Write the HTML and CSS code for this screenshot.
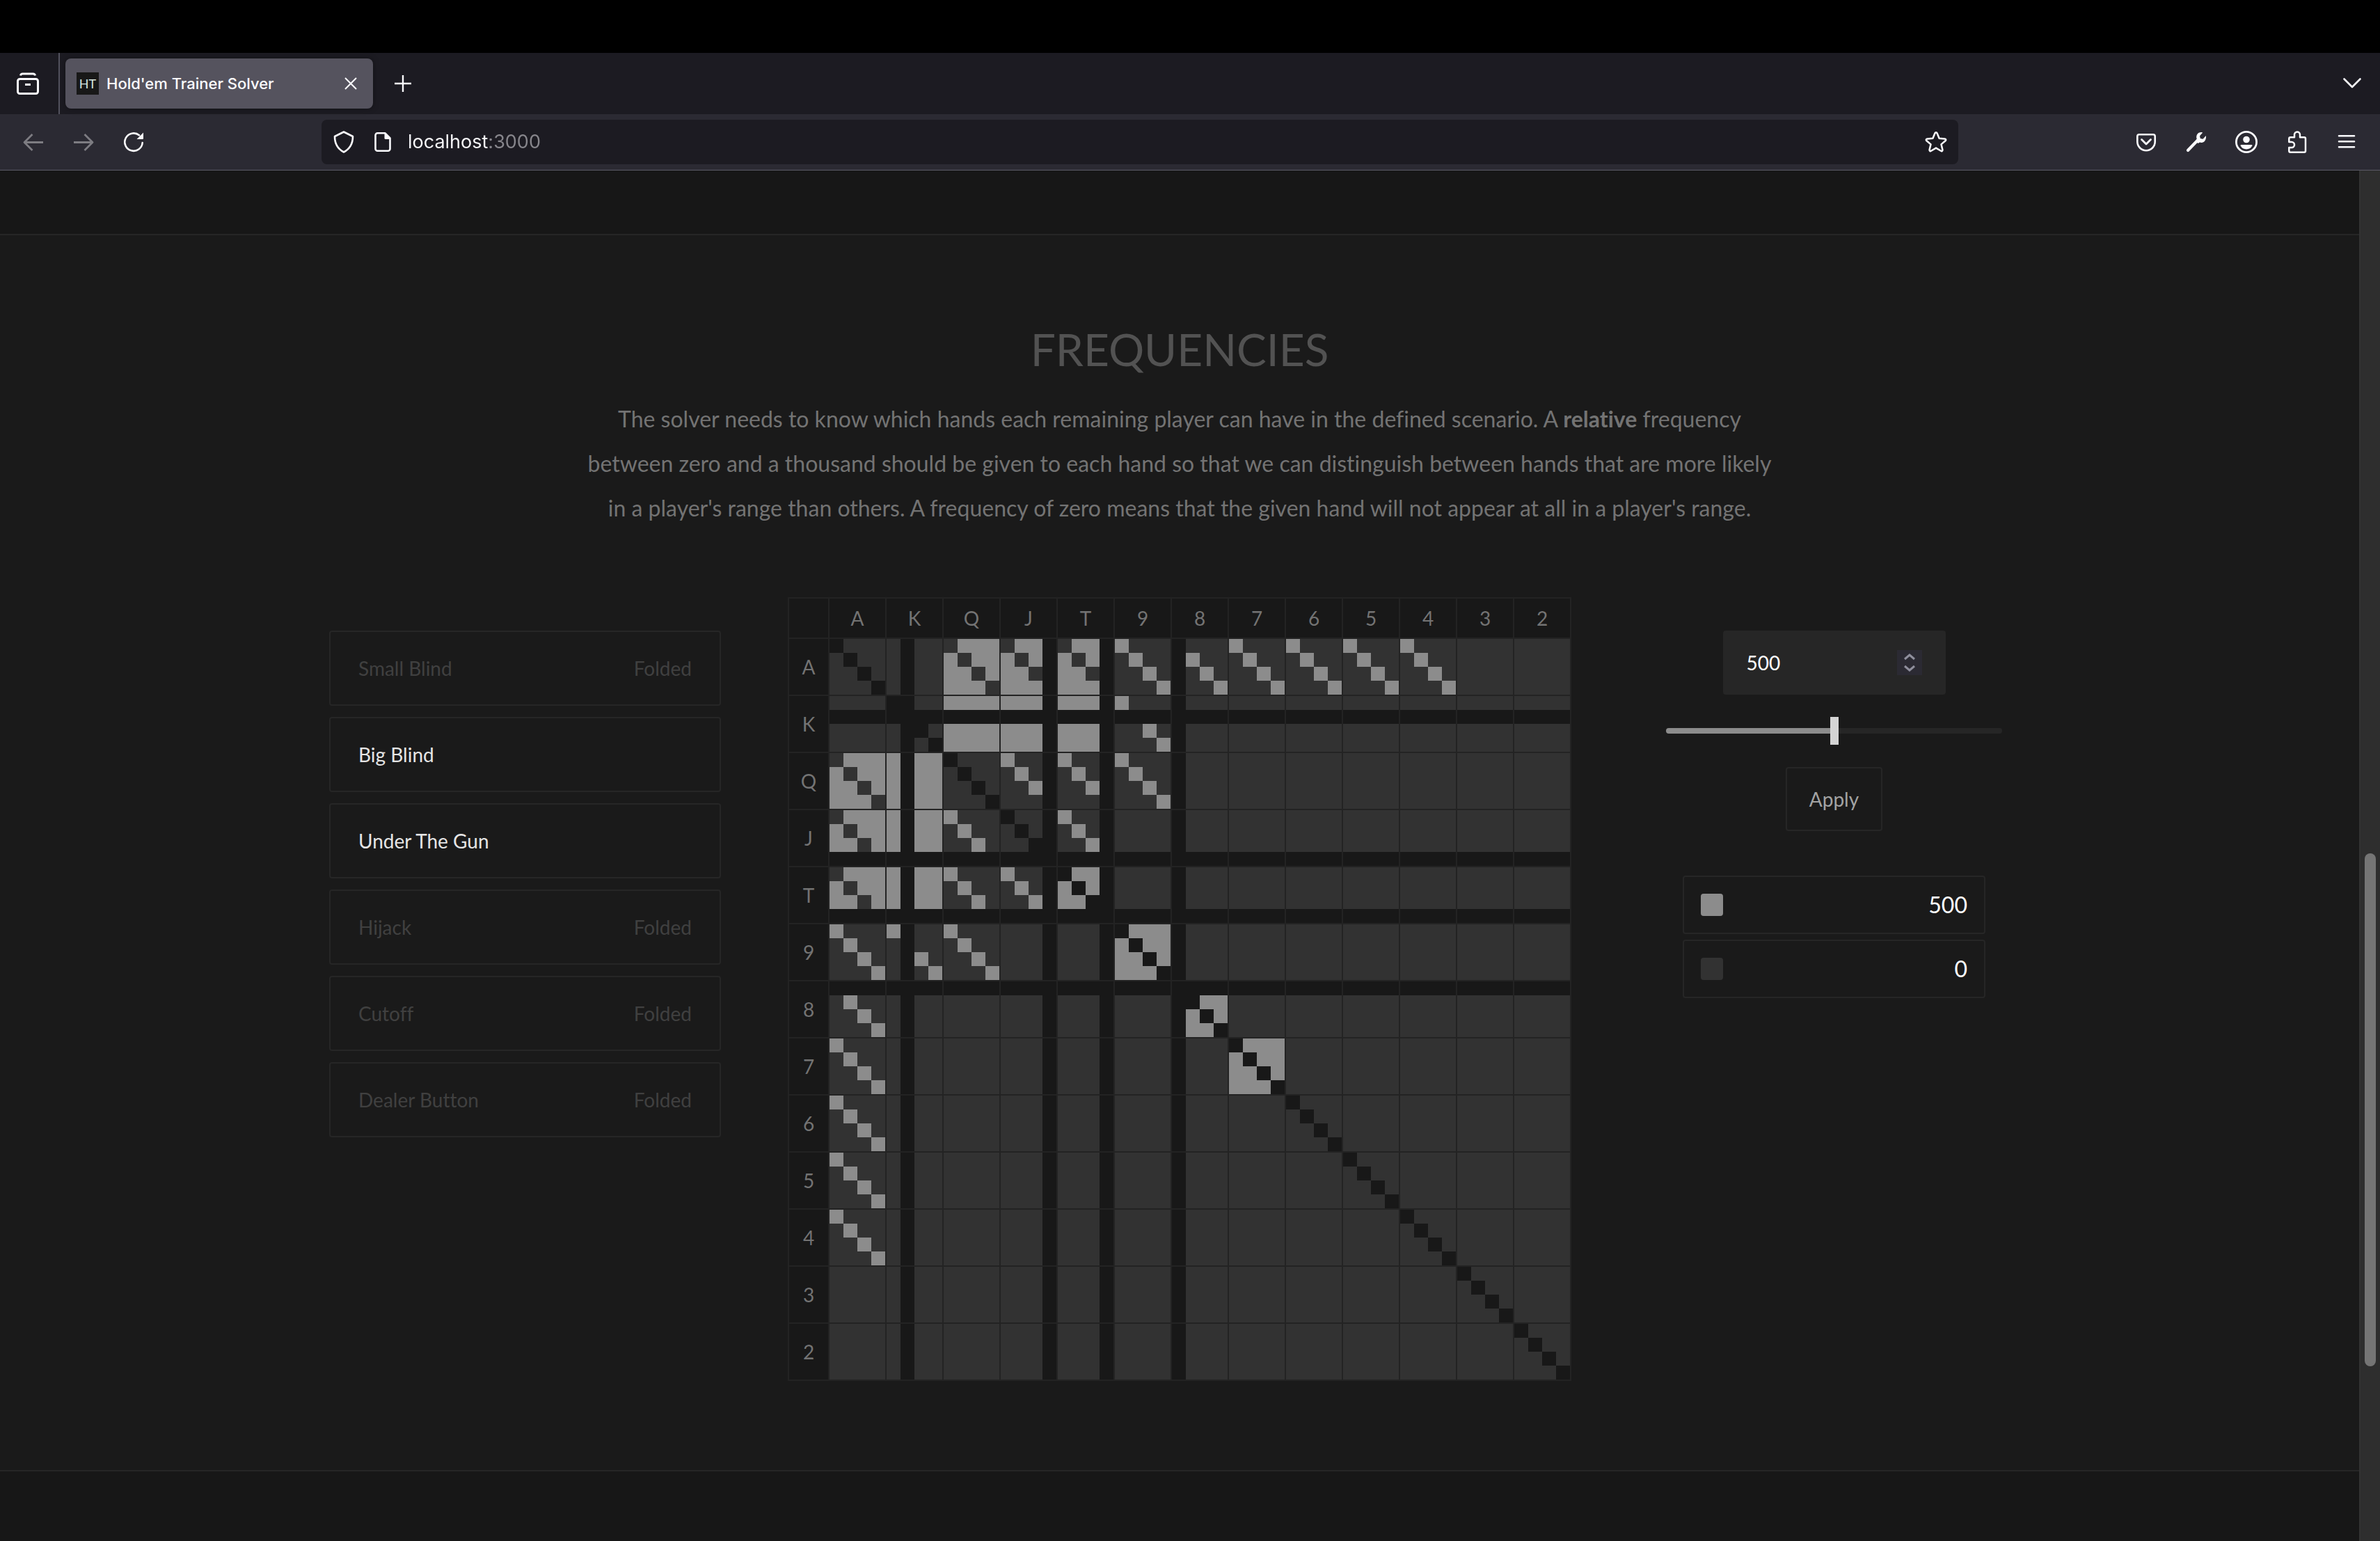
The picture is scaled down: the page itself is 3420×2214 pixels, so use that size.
FILE: index.html
```html
<!DOCTYPE html>
<html lang="en">
<head>
<meta charset="utf-8">
<title>Hold'em Trainer Solver</title>
<link rel="stylesheet" href="styles.css">
</head>
<body>
<header class="browser">
  <div class="menubar-space"></div>
  <div class="tabbar">
    <button class="icon-button view-button" aria-label="Recent browsing">
      <svg viewBox="0 0 32 32"><path d="M5.5 4.500Q6 2 8.500 2h15q2.500 0 3 2.500" fill="none" stroke="currentColor" stroke-width="3"/><rect x="1.500" y="9.500" width="29" height="21" rx="3" fill="none" stroke="currentColor" stroke-width="3"/><path d="M12 17.500h8" stroke="currentColor" stroke-width="3"/></svg>
    </button>
    <div class="tab">
      <span class="favicon" aria-hidden="true">HT</span>
      <span class="tab-title">Hold'em Trainer Solver</span>
      <button class="icon-button tab-close" aria-label="Close tab"><svg viewBox="0 0 32 32"><path d="M8 8l16 16M24 8L8 24" stroke="currentColor" stroke-width="2"/></svg></button>
    </div>
    <button class="icon-button new-tab" aria-label="New tab"><svg viewBox="0 0 32 32"><path d="M16 4v24M4 16h24" stroke="currentColor" stroke-width="2.400"/></svg></button>
    <button class="icon-button all-tabs" aria-label="List all tabs"><svg viewBox="0 0 32 32"><path d="M4.500 9.500L16 21 27.500 9.500" fill="none" stroke="currentColor" stroke-width="2.600" stroke-linecap="round" stroke-linejoin="round"/></svg></button>
  </div>
  <div class="toolbar">
    <nav class="nav-buttons">
      <button class="icon-button" disabled aria-label="Back"><svg viewBox="0 0 32 32"><path d="M30 16.500H3M14.500 5L3 16.500 14.500 28" fill="none" stroke="currentColor" stroke-width="2.800" stroke-linejoin="round"/></svg></button>
      <button class="icon-button" disabled aria-label="Forward"><svg viewBox="0 0 32 32"><path d="M2 16.500h27M17.500 5L29 16.500 17.500 28" fill="none" stroke="currentColor" stroke-width="2.800" stroke-linejoin="round"/></svg></button>
      <button class="icon-button" aria-label="Reload"><svg viewBox="0 0 32 32"><path d="M28.700 17A12.700 12.700 0 1 1 24 6.200" fill="none" stroke="currentColor" stroke-width="2.600" stroke-linecap="round"/><path d="M30 2.500v8.500a1 1 0 0 1-1 1h-8.500z" fill="currentColor"/></svg></button>
    </nav>
    <div class="urlbar">
      <svg class="icon" viewBox="0 0 32 32"><path d="M16 1.500L29 8c0 9-2.500 17-13 22.500C5.500 25 3 17 3 8z" fill="none" stroke="currentColor" stroke-width="2.600" stroke-linejoin="round"/></svg>
      <svg class="icon page-icon" viewBox="0 0 32 32"><path d="M19.500 3.300H8.500a3 3 0 0 0-3 3v19.400a3 3 0 0 0 3 3h15a3 3 0 0 0 3-3V10.500z" fill="none" stroke="currentColor" stroke-width="2.600" stroke-linejoin="round"/><path d="M18.500 3v7.500a1.500 1.500 0 0 0 1.500 1.500h7z" fill="currentColor"/></svg>
      <input class="url" type="text" value="localhost:3000" aria-label="Address">
      <button class="icon-button star" aria-label="Bookmark this page"><svg viewBox="0 0 32 32"><path d="M16 2.300c.8 0 1.300.4 1.600 1.200l3 7.300 7.900.6c1.700.2 2.200 1.800 1 2.900l-6 5.100 1.900 7.700c.3 1.600-1.100 2.500-2.400 1.700L16 24.600l-7 4.200c-1.300.8-2.700-.1-2.400-1.700l1.900-7.700-6-5.100c-1.200-1.100-.7-2.700 1-2.900l7.900-.6 3-7.300c.3-.8.8-1.200 1.600-1.200z" fill="none" stroke="currentColor" stroke-width="2.500" stroke-linejoin="round"/></svg></button>
    </div>
    <div class="tools">
      <button class="icon-button" aria-label="Save to Pocket"><svg viewBox="0 0 32 32"><path d="M6 5.200h20q2.700 0 2.700 2.700v7.600a12.700 12.700 0 0 1-25.400 0V7.900q0-2.700 2.700-2.700z" fill="none" stroke="currentColor" stroke-width="2.600"/><path d="M9.500 12.500l6.500 6.500 6.500-6.500" fill="none" stroke="currentColor" stroke-width="2.800" stroke-linecap="round" stroke-linejoin="round"/></svg></button>
      <button class="icon-button" aria-label="Developer tools"><svg viewBox="0 0 32 32"><path d="M4 28L17.500 14" stroke="currentColor" stroke-width="4.200" stroke-linecap="round"/><path d="M23.500 2c-5.500-.3-8.500 5-6.800 9.500l-1.700 3 3.500 3.500 2.500-1.400c5 1.800 9.800-2.400 8.900-9.600l-4.400 4.700-3.700-.7-.8-3.800 4.200-4.600z" fill="currentColor"/></svg></button>
      <button class="icon-button" aria-label="Account"><svg viewBox="0 0 32 32"><circle cx="16" cy="16" r="14.600" fill="none" stroke="currentColor" stroke-width="2.800"/><circle cx="16" cy="12.500" r="4.800" fill="currentColor"/><path d="M8.500 20h15q1.500 0 .8 1.500a9.500 9.500 0 0 1-16.600 0q-.7-1.500.8-1.500z" fill="currentColor"/></svg></button>
      <button class="icon-button" aria-label="Extensions"><svg viewBox="0 0 32 32"><path d="M5.300 16v-4.700q0-2 2-2H13V5.500a4 4 0 0 1 8 0v3.800h6q2 0 2 2v17.400q0 2-2 2H7.300q-2 0-2-2V24H9a4 4 0 0 0 0-8z" fill="none" stroke="currentColor" stroke-width="2.500" stroke-linejoin="round"/></svg></button>
      <button class="icon-button" aria-label="Menu"><svg viewBox="0 0 32 32"><path d="M5 7.200h22M5 15.200h22M5 23.200h22" stroke="currentColor" stroke-width="2.600" stroke-linecap="round"/></svg></button>
    </div>
  </div>
</header>
<div class="viewport">
  <main class="page">
    <div class="previous-section"></div>
    <section class="frequencies">
      <h1>FREQUENCIES</h1>
      <p class="intro">The solver needs to know which hands each remaining player can have in the defined scenario. A <strong>relative</strong> frequency between zero and a thousand should be given to each hand so that we can distinguish between hands that are more likely in a player's range than others. A frequency of zero means that the given hand will not appear at all in a player's range.</p>
      <div class="columns">
        <div class="players">
          <button class="player folded"><span>Small Blind</span><span>Folded</span></button>
          <button class="player"><span>Big Blind</span></button>
          <button class="player"><span>Under The Gun</span></button>
          <button class="player folded"><span>Hijack</span><span>Folded</span></button>
          <button class="player folded"><span>Cutoff</span><span>Folded</span></button>
          <button class="player folded"><span>Dealer Button</span><span>Folded</span></button>
        </div>
        <table class="matrix" id="matrix" aria-label="Hand frequencies"></table>
        <div class="controls">
          <div class="number">
            <input type="number" value="500" min="0" max="1000" aria-label="Frequency">
            <svg class="spinner" viewBox="0 0 36 36" aria-hidden="true"><path d="M11 13l7-6 7 6M11 23l7 6 7-6" fill="none" stroke="currentColor" stroke-width="3"/></svg>
          </div>
          <input class="slider" type="range" value="500" min="0" max="1000" aria-label="Frequency slider">
          <button class="apply">Apply</button>
          <ul class="legend">
            <li><span class="swatch filled"></span>500</li>
            <li><span class="swatch"></span>0</li>
          </ul>
        </div>
      </div>
    </section>
    <div class="next-section"></div>
  </main>
  <div class="scrollbar" aria-hidden="true"><div class="thumb"></div></div>
</div>
<script src="matrix.js"></script>
</body>
</html>
```
FILE: styles.css
```css
* { box-sizing: border-box; }
body {
  margin: 0;
  min-height: 100vh;
  display: flex;
  flex-direction: column;
  background: #181818;
  color: #e5e5e5;
  font: 28px/40px Lato, "Open Sans", sans-serif;
  font-variant-ligatures: none;
}
button, input { font: inherit; font-variant-ligatures: none; color: inherit; }
button { background: none; border: 0; padding: 0; }

/* Browser window */
.browser { color: #fbfbfe; font-family: Inter, Roboto, sans-serif; }
.menubar-space { height: 76px; background: #000; }
.tabbar { display: flex; align-items: center; height: 88px; background: #1c1b22; padding-right: 24px; }
.icon-button, .icon { display: block; width: 32px; height: 32px; flex: none; }
.icon-button svg { display: block; width: 100%; height: 100%; }
.icon-button:disabled { color: #7d7c82; }
.view-button { width: 86px; height: 88px; padding: 28px 28px 28px 24px; border-right: 2px solid #52525e; }
.tab {
  display: flex;
  align-items: center;
  width: 442px;
  height: 72px;
  margin-left: 8px;
  padding: 0 16px;
  border-radius: 8px;
  background: #55535e;
  box-shadow: 0 0 8px rgba(0, 0, 0, .4);
}
.favicon {
  width: 32px;
  height: 32px;
  background: #181818;
  color: #d6e6e0;
  font: 18px/32px Lato, sans-serif;
  text-align: center;
}
.tab-title { flex: 1; margin-left: 11px; font-size: 22px; font-weight: 500; line-height: 32px; }
.new-tab { margin-left: 27px; }
.all-tabs { margin-left: auto; }
.toolbar {
  display: flex;
  align-items: center;
  justify-content: space-between;
  height: 81px;
  padding: 0 32px;
  background: #2b2a33;
  border-bottom: 1px solid #5b5a66;
}
.nav-buttons, .tools { display: flex; gap: 40px; }
.tools { margin-left: 254px; }
.urlbar {
  display: flex;
  align-items: center;
  flex: 1;
  height: 64px;
  margin-left: 254px;
  padding: 0 16px;
  border-radius: 8px;
  background: #1c1b22;
}
.page-icon { margin-left: 24px; }
/* The host is drawn brighter than the port. */
.url {
  flex: 1;
  min-width: 0;
  height: 40px;
  margin-left: 20px;
  padding: 0;
  border: 0;
  outline: 0;
  font-size: 27px;
  color: transparent;
  background: linear-gradient(90deg, #fbfbfe 117px, #87868c 117px);
  -webkit-background-clip: text;
  background-clip: text;
}

/* Page */
.viewport { flex: 1; display: flex; }
.page { flex: 1; min-width: 0; display: flex; flex-direction: column; background: #171717; }
.previous-section { height: 91px; }
.frequencies {
  padding: 128px 32px;
  background: #1a1a1a;
  border-top: 2px solid #262626;
  border-bottom: 2px solid #262626;
}
h1 { margin: 0 0 32px; font-size: 64px; line-height: 72px; font-weight: 400; text-align: center; color: #525252; }
.intro { max-width: 1728px; margin: 0 auto 96px; font-size: 32px; line-height: 64px; text-align: center; color: #737373; }
.columns {
  display: grid;
  grid-template-columns: 1fr auto 1fr;
  align-items: start;
  justify-items: center;
  max-width: 2636px;
  margin: 0 auto;
}
.players { display: grid; gap: 16px; width: 100%; max-width: 563px; padding-top: 48px; }
.player {
  display: flex;
  align-items: center;
  justify-content: space-between;
  height: 108px;
  padding: 0 40px;
  border: 2px solid #262626;
  border-radius: 4px;
}
.folded { color: #404040; }

.matrix { border-collapse: collapse; }
.matrix th, .matrix td { padding: 0; border: 2px solid #232323; }
.matrix th { width: 82px; height: 82px; font-weight: 400; color: #737373; background: #181818; }
.matrix thead th { height: 58px; }
.matrix th:first-child { width: 58px; }
.combos { display: grid; grid-template: repeat(4, 20px) / repeat(4, 20px); background: #323232; }
.combos .on { background: #8c8c8c; }
.combos .blocked { background: #181818; }

.controls { display: flex; flex-direction: column; align-items: center; width: 100%; padding-top: 48px; }
.number {
  display: flex;
  align-items: center;
  width: 320px;
  height: 92px;
  padding: 0 34px;
  border-radius: 4px;
  background: #262626;
  color: #fff;
}
.number input {
  flex: 1;
  min-width: 0;
  padding: 0;
  border: 0;
  outline: 0;
  background: none;
  appearance: textfield;
}
.number input::-webkit-inner-spin-button { appearance: none; margin: 0; }
.spinner { width: 36px; height: 36px; background: #2b2a33; color: #8f8f9d; }
.slider { appearance: none; width: 64%; height: 40px; margin: 32px 0; background: none; }
.slider::-webkit-slider-runnable-track { height: 8px; border-radius: 4px; background: linear-gradient(90deg, #8c8c8c 50%, #262626 50%); }
.slider::-webkit-slider-thumb { appearance: none; width: 12px; height: 40px; margin-top: -16px; background: #d4d4d4; }
.apply { height: 92px; padding: 0 32px; border: 2px solid #262626; border-radius: 4px; color: #a3a3a3; }
.legend { display: grid; gap: 8px; width: 435px; margin: 64px 0 0; padding: 0; list-style: none; }
.legend li {
  display: flex;
  align-items: center;
  justify-content: space-between;
  height: 84px;
  padding: 0 24px;
  border: 2px solid #262626;
  border-radius: 4px;
  font-size: 32px;
  color: #fff;
}
.swatch { width: 32px; height: 32px; border-radius: 4px; background: #323232; }
.swatch.filled { background: #8c8c8c; }
.next-section { flex: 1; min-height: 100px; }

.scrollbar {
  display: grid;
  grid-template-rows: 981fr 737fr 251fr;
  width: 30px;
  padding: 0 6px;
  border-left: 2px solid #333;
  background: #2e2e2e;
}
.thumb { grid-row: 2; border-radius: 8px; background: #757575; }
```
FILE: matrix.js
```js
const ranks = [...'AKQJT98765432'];
const blocked = new Set(['K1', 'J3', 'T3', '80']);
const range = {
  AQ: 'offsuit', AJ: 'offsuit', AT: 'offsuit',
  A9: 'suited', A8: 'suited', A7: 'suited', A6: 'suited', A5: 'suited', A4: 'suited',
  KQ: 'all', KJ: 'all', KT: 'all', K9: 'suited',
  QJ: 'suited', QT: 'suited', Q9: 'suited', JT: 'suited',
  TT: 'all', 99: 'all', 88: 'all', 77: 'all'
};

function comboClass(row, rowSuit, col, colSuit) {
  const a = ranks[row] + rowSuit;
  const b = ranks[col] + colSuit;
  if (a === b || blocked.has(a) || blocked.has(b)) return 'blocked';
  const kind = range[ranks[Math.min(row, col)] + ranks[Math.max(row, col)]];
  const suited = rowSuit === colSuit;
  const on = kind === 'all' || (kind === 'suited' && suited) || (kind === 'offsuit' && !suited);
  return on ? 'on' : '';
}

let html = '<thead><tr><th></th>' + ranks.map(r => `<th scope="col">${r}</th>`).join('') + '</tr></thead><tbody>';
ranks.forEach((rank, row) => {
  html += `<tr><th scope="row">${rank}</th>`;
  ranks.forEach((_, col) => {
    html += '<td><div class="combos">';
    for (let s = 0; s < 4; s++) {
      for (let t = 0; t < 4; t++) html += `<i class="${comboClass(row, s, col, t)}"></i>`;
    }
    html += '</div></td>';
  });
  html += '</tr>';
});
document.getElementById('matrix').innerHTML = html + '</tbody>';
```
